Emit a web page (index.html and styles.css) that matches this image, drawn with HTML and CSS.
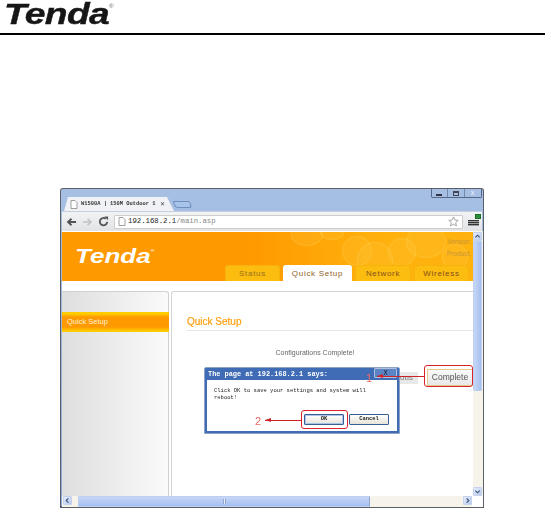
FILE: index.html
```html
<!DOCTYPE html>
<html lang="en">
<head>
<meta charset="utf-8">
<title>Tenda Quick Setup</title>
<link rel="stylesheet" href="styles.css">
</head>
<body>
<header class="doc-head">
  <div class="doc-logo">Tenda<sup class="reg">®</sup></div>
</header>
<main class="window">
  <div class="titlebar">
    <div class="tab">
      <svg class="page-ico" viewBox="0 0 8 9"><path d="M1 .5h4l2 2v6H1z" fill="#fff" stroke="#888" stroke-width=".8"/></svg>
      <span class="tab-title">W1500A | 150M Outdoor 1</span>
      <span class="tab-x">✕</span>
    </div>
    <div class="newtab"></div>
    <div class="winctl">
      <span class="ctl"><i class="ctl-min"></i></span>
      <span class="ctl"><i class="ctl-max"></i></span>
      <span class="ctl ctl-close">x</span>
    </div>
  </div>
  <div class="toolbar">
    <svg class="nav" viewBox="0 0 12 10"><path d="M11 5H3M6 1.500 2.200 5 6 8.500" fill="none" stroke="#555" stroke-width="2"/></svg>
    <svg class="nav" viewBox="0 0 12 10"><path d="M1 5h8M6 1.500 9.800 5 6 8.500" fill="none" stroke="#c4c4c4" stroke-width="1.800"/></svg>
    <svg class="nav nav-reload" viewBox="0 0 12 12"><path d="M10 6.500A4 4 0 1 1 8.500 3" fill="none" stroke="#555" stroke-width="2"/><path d="M7 .5h4v4z" fill="#555"/></svg>
    <div class="address">
      <svg class="page-ico" viewBox="0 0 8 9"><path d="M1 .5h4l2 2v6H1z" fill="#fff" stroke="#888" stroke-width=".8"/></svg>
      <span class="url">192.168.2.1<span class="url-path">/main.asp</span></span>
      <svg class="star" viewBox="0 0 12 12"><path d="m6 1 1.500 3.400 3.600.4-2.700 2.400.8 3.600L6 9 2.800 10.800l.8-3.600L.9 4.800l3.600-.4z" fill="#fff" stroke="#888" stroke-width=".8"/></svg>
    </div>
    <div class="menu"><i></i><i></i><i></i><b class="ext"></b></div>
  </div>
  <div class="view">
    <div class="scrollpane">
      <div class="banner">
        <div class="bubbles">
          <i class="bub b1"></i><i class="bub b2"></i><i class="bub b3"></i><i class="bub b4"></i><i class="bub b5"></i><i class="bub b6"></i><i class="bub b7"></i>
        </div>
        <div class="banner-logo">Tenda<sup class="reg">®</sup></div>
        <div class="meta"><span>Version:</span><span>Product:</span></div>
        <nav class="tabs">
          <span class="navtab t-status">Status</span>
          <span class="navtab t-quick active">Quick Setup</span>
          <span class="navtab t-net">Network</span>
          <span class="navtab t-wl">Wireless</span>
        </nav>
      </div>
      <div class="columns">
        <aside class="sidebar"><div class="side-item">Quick Setup</div></aside>
        <section class="panel">
          <h1 class="panel-title">Quick Setup</h1>
          <p class="complete-msg">Configurations Complete!</p>
          <div class="actions">
            <span class="btn-prev">Previous</span>
            <span class="btn-complete">Complete</span>
          </div>
        </section>
      </div>

      <div class="dialog">
        <div class="dlg-title"><span>The page at 192.168.2.1 says:</span><span class="dlg-x">X</span></div>
        <div class="dlg-body">
          <p class="dlg-text">Click OK to save your settings and system will reboot!</p>
          <div class="dlg-btns"><span class="dlg-btn dlg-ok">OK</span><span class="dlg-btn">Cancel</span></div>
        </div>
      </div>
      <div class="mark mark-complete"></div>
      <div class="mark mark-ok"></div>
      <div class="arrow arrow-1"></div>
      <div class="arrow arrow-2"></div>
      <span class="num num-1">1</span>
      <span class="num num-2">2</span>
    </div>
    <div class="vbar">
      <span class="sbtn">
        <svg viewBox="0 0 8 8"><path d="m1.500 5 2.500-2.500L6.500 5" fill="none" stroke="#3a4f78" stroke-width="1.300"/></svg>
      </span>
      <span class="vthumb"></span>
      <span class="vtrack"></span>
      <span class="sbtn">
        <svg viewBox="0 0 8 8"><path d="M1.500 3 4 5.500 6.500 3" fill="none" stroke="#3a4f78" stroke-width="1.300"/></svg>
      </span>
    </div>
    <div class="hbar">
      <span class="sbtn">
        <svg viewBox="0 0 8 8"><path d="M5 1.500 2.500 4 5 6.500" fill="none" stroke="#3a4f78" stroke-width="1.300"/></svg>
      </span>
      <span class="hgap"></span>
      <span class="hthumb"><i></i></span>
      <span class="htrack"></span>
      <span class="sbtn">
        <svg viewBox="0 0 8 8"><path d="M3 1.500 5.500 4 3 6.500" fill="none" stroke="#3a4f78" stroke-width="1.300"/></svg>
      </span>
      <span class="corner"></span>
    </div>
  </div>
</main>
</body>
</html>
```
FILE: styles.css
```css
* { box-sizing: border-box; }
html, body { margin: 0; padding: 0; background: #fff; }
body { width: 545px; height: 508px; overflow: hidden; font-family: "Liberation Sans", Arial, sans-serif; }
i { display: block; }

/* Document header */
.doc-head { height: 35px; border-bottom: 2px solid #000; padding: 0 0 0 4px; }
.doc-logo { font: italic 700 30px/28px "Liberation Sans", sans-serif; letter-spacing: -.5px; color: #161616; -webkit-text-stroke: .4px #161616; filter: blur(.4px); width: max-content; white-space: nowrap; transform-origin: 0 0; transform: scaleX(1.24); }
.doc-logo .reg { font-size: 5px; font-style: normal; font-weight: 400; vertical-align: 16px; line-height: 0; color: #666; -webkit-text-stroke: 0; }

/* Browser window */
.window { width: 424px; height: 320px; margin: 153px 0 0 60px; background: linear-gradient(#a6bfe3, #8fabd8); border: 1px solid #5a5f68; border-bottom-width: 2px; border-radius: 3px 3px 0 0; padding: 0 1px 0 1px; display: flex; flex-direction: column; filter: blur(.35px); position: relative; }

.titlebar { height: 22px; flex: none; display: flex; align-items: flex-end; position: relative; padding-left: 2px; }
.tab { width: 110px; height: 14px; background: #f0f2f5; clip-path: polygon(4px 0, 103px 0, 110px 100%, 0 100%); display: flex; align-items: center; gap: 3px; padding: 0 0 0 6px; }
.page-ico { width: 8px; height: 9px; flex: none; }
.tab-title { font: 700 5.400px/1.2 "Liberation Mono", monospace; color: #333; white-space: nowrap; }
.tab-x { font-size: 6px; line-height: 8px; color: #444; margin-left: 2px; }
.newtab { width: 17px; height: 7px; margin: 0 0 3px 0; background: #a8c3ea; border: 1px solid #6f8fc0; border-radius: 1px 2px 3px 3px; transform: skewX(20deg); }
.winctl { display: flex; height: 9px; margin-left: auto; align-self: flex-start; border: 1px solid #56688a; border-top: 0; border-radius: 0 0 2px 2px; }
.ctl { width: 16.500px; border-right: 1px solid #7088ae; position: relative; display: flex; align-items: center; justify-content: center; }
.ctl-min { width: 6px; height: 2px; background: #334; margin-top: 3px; }
.ctl-max { width: 6px; height: 5px; border: 1px solid #445; border-top-width: 2px; }
.ctl-close { border-right: 0; font: 700 7px/8px "Liberation Sans", sans-serif; color: #dfe6f2; }

.toolbar { height: 20px; flex: none; background: linear-gradient(#f2f3f5, #e2e3e5); border-top: 1px solid #c6cfdd; display: flex; align-items: center; padding: 0 3px 0 4px; gap: 5px; }
.nav { width: 11px; height: 10px; flex: none; }
.nav-reload { height: 11px; }
.address { height: 14px; flex: 1; background: #fff; border: 1px solid #cdcdcd; border-radius: 1px; display: flex; align-items: center; padding: 0 3px; gap: 2px; }
.url { font: 400 7.300px/9px "Liberation Mono", monospace; color: #222; white-space: nowrap; flex: 1; }
.url-path { color: #888; }
.star { width: 11px; height: 11px; flex: none; }
.menu { width: 11px; position: relative; display: flex; flex-direction: column; gap: 1px; flex: none; margin-top: 2px; }
.menu i { height: 1px; background: #333; box-shadow: 0 .5px 0 #555; }
.ext { position: absolute; top: -6px; right: -2px; width: 6px; height: 5px; background: #2c8f3a; border: 1px solid #1d6d2a; }

.view { flex: 1; min-height: 0; display: grid; grid-template-columns: 411px 10px; grid-template-rows: 265px 11px; background: #fff; }
.scrollpane { grid-column: 1; grid-row: 1; position: relative; overflow: hidden; }

.banner { height: 49px; background: linear-gradient(90deg, #ff9900 0 45%, #ffb00c 75%, #ffb30e); position: relative; margin-top: 1px; overflow: hidden; }
.bubbles { position: absolute; inset: 0; }
.bub { position: absolute; border-radius: 50%; background: rgba(255, 214, 90, .14); border: 1px solid rgba(255, 224, 120, .22); }
.b1 { left: 229px; top: -8px; width: 32px; height: 22px; }
.b2 { left: 280px; top: 4px; width: 30px; height: 30px; }
.b3 { left: 295px; top: 10px; width: 36px; height: 36px; }
.b4 { left: 326px; top: 6px; width: 28px; height: 28px; }
.b5 { left: 344px; top: -6px; width: 40px; height: 32px; }
.b6 { left: 380px; top: 12px; width: 26px; height: 26px; }
.b7 { left: 258px; top: -8px; width: 24px; height: 16px; }
.banner-logo { position: absolute; left: 13px; top: 13px; font: italic 700 20px/22px "Liberation Sans", sans-serif; color: #fff; white-space: nowrap; transform-origin: 0 0; transform: scaleX(1.3); }
.banner-logo .reg { font-size: 4px; font-style: normal; vertical-align: 11px; line-height: 0; }
.meta { position: absolute; right: 2px; top: 6px; display: flex; flex-direction: column; gap: 5px; font-size: 6.500px; line-height: 7px; color: #c8963e; align-items: flex-end; }
.tabs { position: absolute; left: 163px; bottom: 0; display: flex; gap: 3px; }
.navtab { height: 16px; background: #fdbc10; border: 1px solid #f7b20c; border-bottom: 0; border-radius: 3px 3px 0 0; font: 400 8px/15px "Liberation Sans", sans-serif; letter-spacing: .7px; text-align: center; color: #96701f; }
.t-status { width: 55px; }
.t-quick { width: 69px; background: #fff; border-color: #fff; color: #8f6228; }
.t-net { width: 56px; color: #7f4f1c; }
.t-wl { width: 55px; color: #7f4f1c; }

.columns { display: flex; gap: 2px; padding-top: 10px; height: 215px; }
.sidebar { width: 107px; flex: none; height: 205px; background: linear-gradient(90deg, #dedede, #fafafa); border-right: 1px solid #d0d0d0; border-top: 1px solid #d0d0d0; border-top-right-radius: 3px; padding-top: 20px; }
.side-item { height: 20px; background: linear-gradient(#ffcc00 0 2px, #ff9900 5px, #ff9900 15px, #ffcc00 19px); margin-right: -1px; padding-left: 5px; font-size: 7.500px; line-height: 20px; color: #fff2d0; }
.panel { flex: 1; height: 205px; border: 1px solid #d4d4d4; border-bottom: 0; border-right: 0; border-top-left-radius: 3px; padding: 20px 0 0 15px; position: relative; }
.panel-title { margin: 0; height: 19px; font: 400 10px/19px "Liberation Sans", sans-serif; color: #ff9f10; -webkit-text-stroke: .2px #ff9f10; border-bottom: 1px solid #e6e6e6; }
.complete-msg { margin: 17px 0 0; width: 256px; text-align: center; font-size: 7px; line-height: 9px; color: #666; }
.actions { position: absolute; right: 0; top: 77px; display: flex; align-items: center; }
.btn-prev { position: absolute; right: 55px; top: 3px; width: 52px; height: 12px; background: #e8e8e8; font-size: 8px; line-height: 12px; color: #777; text-align: right; padding-right: 5px; }
.btn-complete { width: 46px; height: 17px; background: linear-gradient(#fafafa, #e8e8e8); border: 1px solid #e6c98a; font-size: 8.500px; line-height: 15px; text-align: center; color: #555; }

/* JS dialog over the page */
.dialog { position: absolute; left: 142px; top: 136px; width: 196px; height: 67px; background: #3f6cb4; padding: 0 2px 2px; border: 1px solid #8fa2c6; border-radius: 2px 2px 0 0; display: flex; flex-direction: column; z-index: 2; }
.dlg-title { height: 12px; flex: none; display: flex; justify-content: space-between; font: 700 6.900px/12px "Liberation Mono", monospace; color: #fff; padding-left: 1px; position: relative; }
.dlg-x { width: 23px; height: 10px; background: #5b84c4; border: 1px solid #aebfe0; border-radius: 1px; font: 400 7px/8px "Liberation Mono", monospace; color: #223; text-align: center; }
.dlg-body { flex: 1; background: #fff; padding: 7px 0 0 7px; display: flex; flex-direction: column; }
.dlg-text { margin: 0; width: 156px; font: 400 5.500px/7px "Liberation Mono", monospace; color: #222; height: 27px; }
.dlg-btns { display: flex; justify-content: flex-end; gap: 5px; padding-right: 8px; }
.dlg-btn { width: 40px; height: 11px; border: 1px solid #3a5f95; border-radius: 1px; background: linear-gradient(#fff, #e6e3d8); font: 700 5.400px/9px "Liberation Mono", monospace; text-align: center; color: #222; }
.dlg-ok { box-shadow: inset 0 0 0 1px #a8c4ea; }

.mark { position: absolute; border: 1.500px solid #d9252a; border-radius: 3px; z-index: 3; }
.mark-complete { left: 362px; top: 134px; width: 49px; height: 22px; }
.mark-ok { left: 239px; top: 179px; width: 47px; height: 19px; }
.arrow { position: absolute; height: 1px; background: #c8242a; z-index: 3; }
.arrow::before { content: ""; position: absolute; left: 0; top: -2px; border-right: 6px solid #c8242a; border-top: 2.500px solid transparent; border-bottom: 2.500px solid transparent; }
.arrow-1 { left: 315px; top: 145px; width: 47px; }
.arrow-2 { left: 203px; top: 189px; width: 36px; }
.num { position: absolute; font: 400 11px/11px "Liberation Sans", sans-serif; color: #f06a62; z-index: 3; }
.num-1 { left: 304px; top: 142px; }
.num-2 { left: 193px; top: 185px; }

/* Scrollbars */
.vbar { grid-column: 2; grid-row: 1; display: flex; flex-direction: column; background: #f6f4ea; padding-top: 1px; }
.sbtn { flex: none; width: 9px; height: 9px; background: linear-gradient(135deg, #e6eefb, #b6c9ec); border: 1px solid #c4d2ee; border-radius: 1px; display: flex; }
.sbtn svg { width: 100%; height: 100%; }
.vthumb { height: 150px; flex: none; width: 9px; background: linear-gradient(90deg, #c6d6f6, #a7c0f0); border: 1px solid #bdd0f2; border-radius: 1px; }
.vtrack { flex: 1; }
.hbar { grid-column: 1 / 3; grid-row: 2; display: flex; background: #f6f4ea; padding-left: 1px; }
.hgap { width: 6px; flex: none; }
.hthumb { width: 292px; flex: none; background: linear-gradient(#c6d6f6, #a7c0f0); border: 1px solid #bdd0f2; border-right: 1px solid #8ea6d0; border-radius: 1px; display: flex; align-items: center; justify-content: center; }
.hthumb i { width: 3px; height: 5px; background: #e8eefb; border: 1px solid #8fa6d2; border-width: 0 1px; }
.htrack { flex: 1; }
.corner { width: 11px; flex: none; background: #fff; }
```
